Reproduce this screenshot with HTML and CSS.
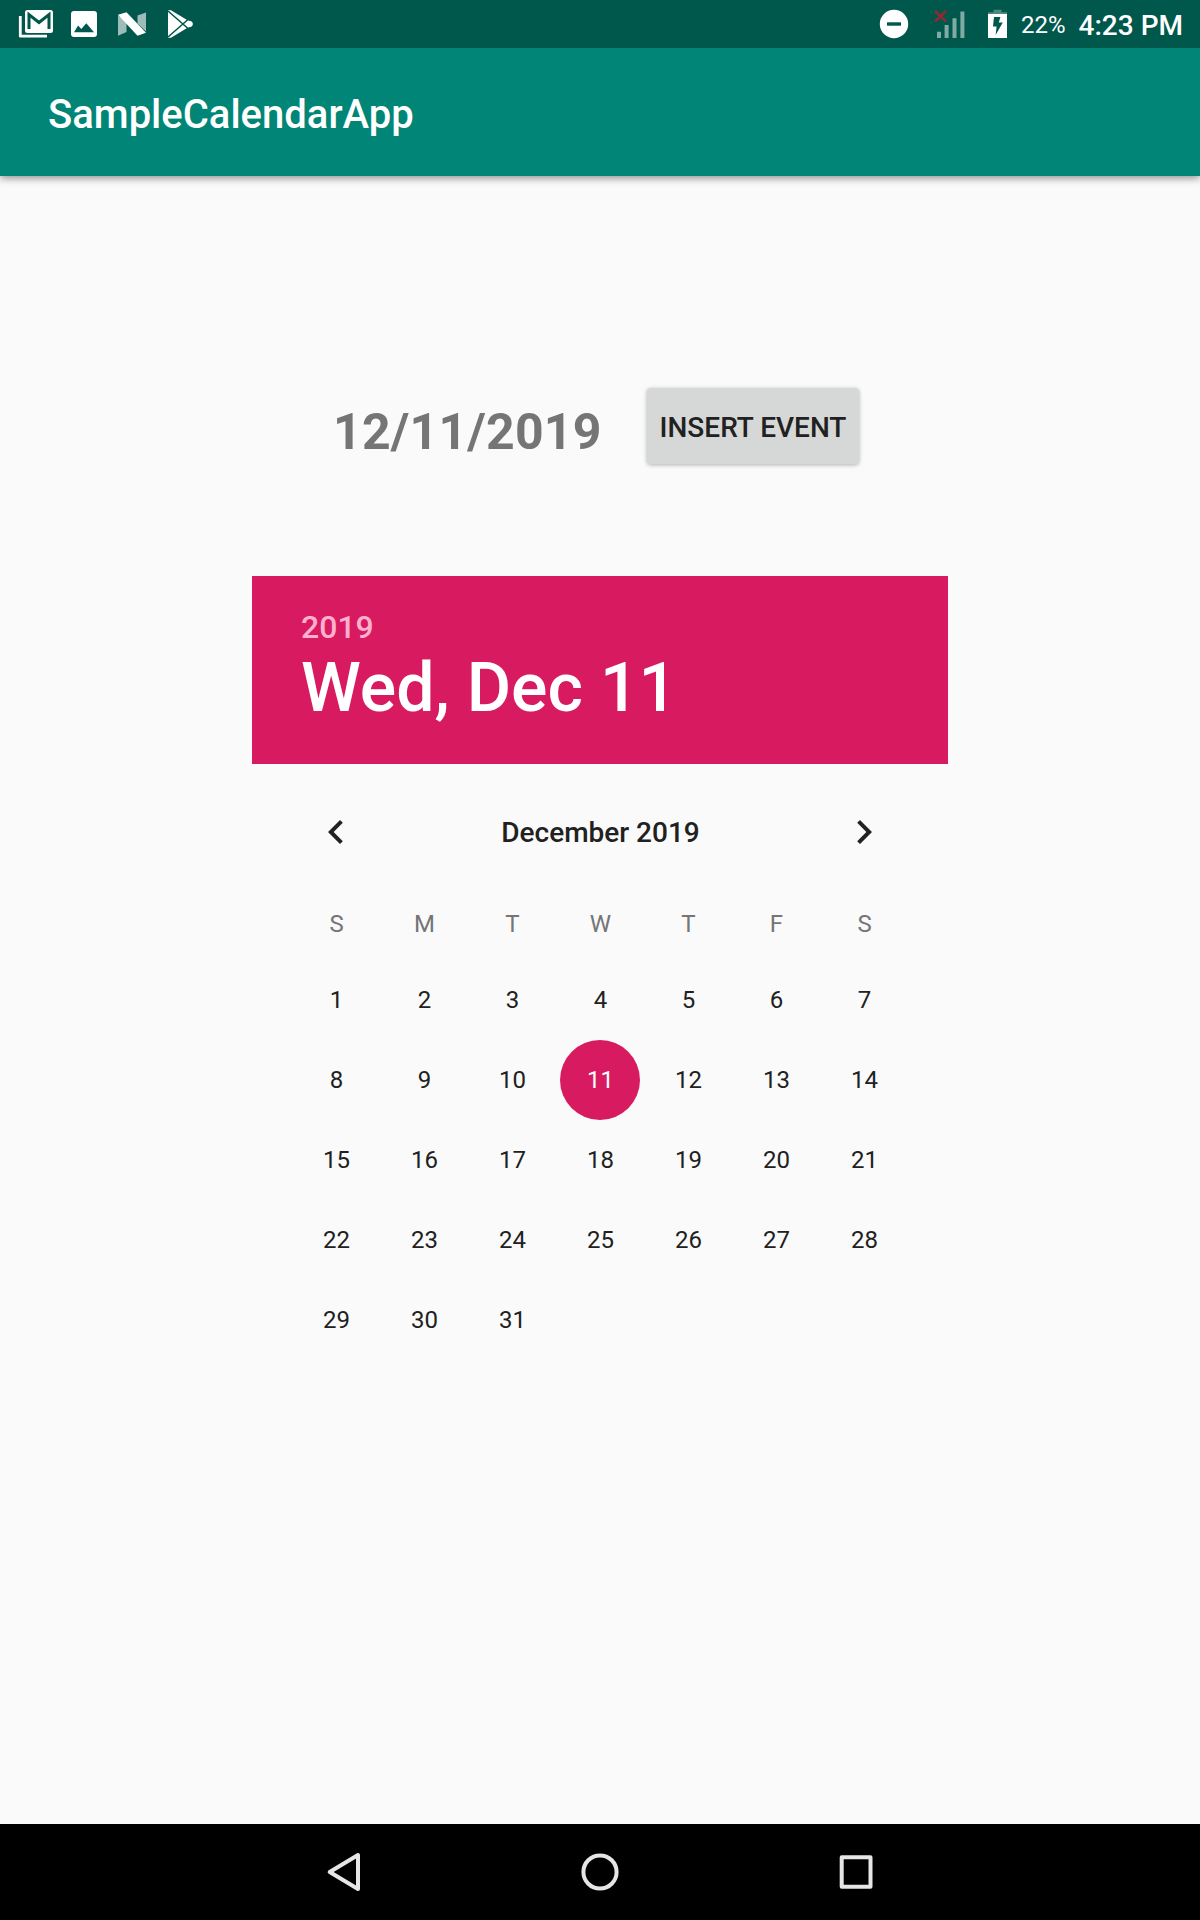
FILE: index.html
```html
<!DOCTYPE html>
<html lang="en">
<head>
<meta charset="utf-8">
<title>SampleCalendarApp</title>
<link rel="stylesheet" href="styles.css">
</head>
<body>
<div class="screen">
  <div class="status-bar">
    <div class="notifications">
      <svg width="36" height="30" viewBox="18 9 36 30">
        <path d="M20.3 16V36.2H47" fill="none" stroke="#fff" stroke-width="2.8" stroke-linejoin="round"/>
        <rect x="25" y="10" width="28" height="23" rx="2.5" fill="#fff"/>
        <path d="M29 29V14.5l10 8 10-8V29" fill="none" stroke="#00574b" stroke-width="3"/>
      </svg>
      <svg class="photo" width="26" height="26" viewBox="71 11 26 26">
        <path fill="#fff" fill-rule="evenodd" d="M74 11h20q3 0 3 3v20q0 3-3 3H74q-3 0-3-3V14q0-3 3-3zM74 32.3h20l-7.7-9-5 5.7-3.2-3.4z"/>
      </svg>
      <svg class="nougat" width="28" height="26" viewBox="118 11 28 26">
        <path fill="#9dbdb8" d="M118 15l8.5 7v10l-8.5 3.8zM146 12.4v19l-8.5-8v-8z"/>
        <path fill="#fff" d="M118 14.8l8.5-2.5L146 32.7l-8.5 3z"/>
      </svg>
      <svg class="play" width="27" height="30" viewBox="167 9 27 30">
        <path fill="#fff" d="M168 10.2l3 0 16.5 10.1 4.2 1.3q2.4 2.4 0 4.8l-4.2 1.3L171 37.8h-3z"/>
        <path fill="none" stroke="#00574b" stroke-width="1.6" d="M168 11l19.5 17M168 37l19.5-17"/>
      </svg>
    </div>
    <div class="indicators">
      <svg width="30" height="30" viewBox="879 9 30 30">
        <circle cx="894" cy="24" r="14.2" fill="#fff"/>
        <path fill="#00574b" d="M887 22.3h14v3.4h-14z"/>
      </svg>
      <svg class="signal" width="32" height="30" viewBox="932 9 32 30">
        <path fill="#80aba5" d="M936 31.7h4V38h-4zM943.6 25h4v13h-4zM951.5 18.3h4V38h-4zM959.4 11.5h4V38h-4z"/>
        <path stroke="#8a2c33" stroke-width="2.8" d="M934 11l11 10.5M945 11l-11 10.5"/>
      </svg>
      <svg class="battery" width="19" height="30" viewBox="988 9 19 30">
        <path fill="#4d8981" d="M993.5 9.8h8v2.4h5.5V17h-19v-4.8h5.5z"/>
        <path fill="#fff" d="M988 14h19v24h-19z"/>
        <path fill="#00574b" d="M994 17h6.4l-1.6 5.5h4L995.6 35l1-8.6H993z"/>
      </svg>
      <span class="percent">22%</span>
      <span class="clock">4:23 PM</span>
    </div>
  </div>

  <header class="app-bar">SampleCalendarApp</header>

  <main class="content">
    <div class="event-row">
      <span class="date">12/11/2019</span>
      <button class="insert">INSERT EVENT</button>
    </div>

    <section class="picker">
      <div class="picker-header">
        <div class="year">2019</div>
        <div class="day-title">Wed, Dec 11</div>
      </div>
      <div class="month-bar">
        <svg width="48" height="48" viewBox="0 0 24 24"><path fill="#212121" d="M15.41 7.41L14 6l-6 6 6 6 1.41-1.41L10.83 12z"/></svg>
        <span class="month">December 2019</span>
        <svg width="48" height="48" viewBox="0 0 24 24"><path fill="#212121" d="M8.59 7.41L10 6l6 6-6 6-1.41-1.41L13.17 12z"/></svg>
      </div>
      <div class="weekdays">
        <span>S</span><span>M</span><span>T</span><span>W</span><span>T</span><span>F</span><span>S</span>
      </div>
      <div class="days">
        <span>1</span><span>2</span><span>3</span><span>4</span><span>5</span><span>6</span><span>7</span>
        <span>8</span><span>9</span><span>10</span><span class="selected">11</span><span>12</span><span>13</span><span>14</span>
        <span>15</span><span>16</span><span>17</span><span>18</span><span>19</span><span>20</span><span>21</span>
        <span>22</span><span>23</span><span>24</span><span>25</span><span>26</span><span>27</span><span>28</span>
        <span>29</span><span>30</span><span>31</span>
      </div>
    </section>
  </main>

  <nav class="nav-bar">
    <svg width="44" height="44" viewBox="-22 -22 44 44"><path d="M14 -17V17L-14.3 0z" fill="none" stroke="#e6e6e6" stroke-width="4" stroke-linejoin="round"/></svg>
    <svg width="44" height="44" viewBox="-22 -22 44 44"><circle r="16.6" fill="none" stroke="#e6e6e6" stroke-width="4"/></svg>
    <svg width="44" height="44" viewBox="-22 -22 44 44"><rect x="-14.3" y="-14.7" width="28.8" height="29.4" fill="none" stroke="#e6e6e6" stroke-width="4" stroke-linejoin="round"/></svg>
  </nav>
</div>
</body>
</html>
```
FILE: styles.css
```css
* {
  box-sizing: border-box;
}

body {
  margin: 0;
  background: #fafafa;
  color: #212121;
  font-family: Roboto, sans-serif;
}

svg {
  display: block;
  flex: none;
}

.screen {
  display: flex;
  flex-direction: column;
  width: 1200px;
  height: 1920px;
}

.status-bar {
  display: flex;
  justify-content: space-between;
  height: 48px;
  padding: 0 17px 0 18px;
  background: #00574b;
  color: #fff;
}

.notifications,
.indicators {
  display: flex;
  align-items: center;
}

.photo {
  margin-left: 17px;
}

.nougat,
.play {
  margin-left: 21px;
}

.signal {
  margin-left: 24px;
}

.battery {
  margin-left: 23px;
}

.percent {
  margin-left: 14px;
  padding-top: 1px;
  font-size: 24px;
  line-height: 48px;
}

.clock {
  margin-left: 13px;
  padding-top: 3px;
  font-size: 28px;
  font-weight: 500;
  line-height: 48px;
}

.app-bar {
  height: 128px;
  padding-left: 48px;
  background: #008577;
  box-shadow: 0 2px 8px rgba(0, 0, 0, 0.45);
  clip-path: inset(0 0 -12px 0);
  color: #fff;
  font-size: 40px;
  font-weight: 500;
  line-height: 134px;
}

.content {
  display: flex;
  flex: 1;
  flex-direction: column;
  align-items: center;
  padding-top: 212px;
}

.event-row {
  display: flex;
  align-items: flex-start;
  justify-content: space-between;
  width: 526px;
  height: 76px;
  margin-right: 8px;
}

.date {
  padding-top: 14px;
  color: #757575;
  font-size: 50px;
  font-weight: 700;
  letter-spacing: 0.2px;
  line-height: 60px;
}

.insert {
  width: 212px;
  height: 76px;
  padding: 3px 0 0;
  border: 0;
  border-radius: 4px;
  background: #d6d8d7;
  box-shadow: 0 1px 4px rgba(0, 0, 0, 0.3);
  color: #212121;
  font: 500 28px/73px Roboto, sans-serif;
  white-space: nowrap;
}

.picker {
  width: 696px;
  margin-top: 112px;
}

.picker-header {
  height: 188px;
  padding: 31px 48px 0 49px;
  background: #d81b60;
  color: #fff;
}

.year {
  color: #ffb0cf;
  font-size: 32px;
  font-weight: 500;
  line-height: 40px;
}

.day-title {
  font-size: 68px;
  font-weight: 500;
  line-height: 82px;
}

.month-bar {
  display: flex;
  align-items: center;
  justify-content: space-between;
  height: 136px;
  padding: 0 60px;
  font-size: 28px;
  font-weight: 500;
}

.month {
  padding-left: 1px;
}

.weekdays,
.days {
  display: grid;
  grid-template-columns: repeat(7, 88px);
  justify-content: center;
  font-size: 24px;
  text-align: center;
}

.weekdays span,
.days span {
  padding-left: 1px;
}

.weekdays {
  height: 60px;
  color: #757575;
  line-height: 48px;
}

.days {
  grid-auto-rows: 80px;
  line-height: 80px;
}

.selected {
  width: 80px;
  justify-self: center;
  border-radius: 50%;
  background: #d81b60;
  color: #fff;
}

.nav-bar {
  display: flex;
  align-items: center;
  justify-content: center;
  gap: 212px;
  height: 96px;
  background: #000;
}
```
